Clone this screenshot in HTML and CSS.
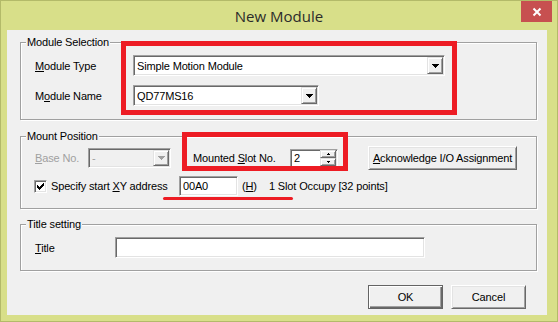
FILE: index.html
```html
<!DOCTYPE html>
<html lang="en">
<head>
    <meta charset="UTF-8">
    <title>New Module</title>
    <link rel="stylesheet" href="styles.css">
</head>
<body>
    <div class="window">
        <div class="titlebar">
            <div class="caption">New Module</div>
            <div class="close">
                <svg width="10" height="10" viewBox="0 0 10 10"><path d="M1.5 1.5L8.5 8.5M8.5 1.5L1.5 8.5" stroke="#fff" stroke-width="2"/></svg>
            </div>
        </div>

        <div class="client">
            <div class="group group-module">
                <div class="group-title">Module Selection</div>
                <div class="row">
                    <span class="lbl lbl-module"><u>M</u>odule Type</span>
                    <div class="field combo combo-type">
                        <span class="field-text">Simple Motion Module</span>
                        <span class="drop"><svg width="7" height="4" viewBox="0 0 7 4"><path d="M0 0h7v1H0zM1 1h5v1H1zM2 2h3v1H2zM3 3h1v1H3z"/></svg></span>
                    </div>
                </div>
                <div class="row row-gap9">
                    <span class="lbl lbl-module">M<u>o</u>dule Name</span>
                    <div class="field combo combo-name">
                        <span class="field-text">QD77MS16</span>
                        <span class="drop"><svg width="7" height="4" viewBox="0 0 7 4"><path d="M0 0h7v1H0zM1 1h5v1H1zM2 2h3v1H2zM3 3h1v1H3z"/></svg></span>
                    </div>
                </div>
            </div>

            <div class="group group-mount">
                <div class="group-title">Mount Position</div>
                <div class="row row-top">
                    <span class="lbl lbl-base disabled"><u>B</u>ase No.</span>
                    <div class="field combo combo-base disabled">
                        <span class="field-text">-</span>
                        <span class="drop"><svg width="7" height="4" viewBox="0 0 7 4"><path fill="#a0a0a0" d="M0 0h7v1H0zM1 1h5v1H1zM2 2h3v1H2zM3 3h1v1H3z"/></svg></span>
                    </div>
                    <span class="lbl lbl-slot">Mounted <u>S</u>lot No.</span>
                    <div class="field spin">
                        <span class="field-text">2</span>
                        <span class="spin-btns">
                            <span class="spin-btn"><svg width="5" height="3" viewBox="0 0 5 3"><path d="M2 0h1v1H2zM1 1h3v1H1z"/></svg></span>
                            <span class="spin-btn"><svg width="5" height="3" viewBox="0 0 5 3"><path d="M1 0h3v1H1zM2 1h1v1H2z"/></svg></span>
                        </span>
                    </div>
                    <button class="btn btn-ack"><u>A</u>cknowledge I/O Assignment</button>
                </div>
                <div class="row row-gap6">
                    <span class="check">
                        <svg width="7" height="7" viewBox="0 0 7 7"><path d="M6 0h1v3H6zM5 1h1v3H5zM4 2h1v3H4zM3 3h1v3H3zM2 4h1v3H2zM1 3h1v3H1zM0 2h1v3H0z"/></svg>
                    </span>
                    <span class="lbl lbl-xy">Specify start <u>X</u>Y address</span>
                    <div class="field edit-xy"><span class="field-text">00A0</span></div>
                    <span class="lbl lbl-hex">(<u>H</u>)</span>
                    <span class="lbl">1 Slot Occupy [32 points]</span>
                </div>
            </div>

            <div class="group group-title-set">
                <div class="group-title">Title setting</div>
                <div class="row">
                    <span class="lbl lbl-title"><u>T</u>itle</span>
                    <div class="field edit-title"></div>
                </div>
            </div>

            <div class="actions">
                <button class="btn btn-default">OK</button>
                <button class="btn">Cancel</button>
            </div>

            <!-- red annotation marks drawn over the dialog -->
            <div class="mark mark-module"></div>
            <div class="mark mark-slot"></div>
            <div class="mark mark-line"></div>
        </div>
    </div>
</body>
</html>
```

FILE: styles.css
```css
* { box-sizing: border-box; }
body { margin: 0; font-family: "Liberation Sans", Arial, sans-serif; font-size: 11px; letter-spacing: -0.15px; color: #000; }
u { text-decoration: underline; text-underline-offset: 1px; }

.window {
    width: 558px; height: 322px;
    background: #d8df89;
    border: 1px solid #b3ba69;
    display: flex; flex-direction: column;
}
.titlebar { height: 29px; display: grid; grid-template-columns: 1fr auto 1fr; align-items: start; }
.caption { grid-column: 2; font-family: "Open Sans", sans-serif; font-size: 15px; letter-spacing: 0; line-height: 30px; color: #2b2b2b; }
.close {
    grid-column: 3; justify-self: end;
    width: 31px; height: 21px; margin-right: 5px;
    background: #c75050;
    display: flex; align-items: center; justify-content: center;
}

.client {
    position: relative; flex: 1;
    margin: 0 10px 6px 6px;
    padding: 12px 10px 0 13px;
    background: #f0f0f0;
}

/* group boxes */
.group {
    position: relative;
    border: 1px solid #a0a0a0;
    box-shadow: inset 1px 1px 0 #fff, 1px 1px 0 #fff;
    padding: 12px 12px 13px 14px;
}
.group-title { position: absolute; top: -7px; left: 5px; padding: 0 1px; background: #f0f0f0; line-height: 13px; }
.group-mount { margin-top: 16px; padding-top: 9px; padding-bottom: 12px; }
.group-title-set { margin-top: 15px; padding-bottom: 12px; }

.row { display: flex; align-items: center; }
.row-gap9 { margin-top: 9px; }
.row-gap6 { margin-top: 6px; }
.row-top { height: 24px; }

.lbl { white-space: nowrap; }
.lbl-module { width: 98px; }
.lbl-base { width: 53px; }
.lbl-slot { width: 97px; margin-left: 22px; }
.lbl-xy { width: 128px; margin-left: 4px; }
.lbl-hex { width: 27px; margin-left: 4px; }
.lbl-title { width: 80px; }
.disabled { color: #a0a0a0; }

/* sunken fields */
.field {
    height: 21px;
    background: #fff;
    border: 1px solid; border-color: #a0a0a0 #fff #fff #a0a0a0;
    box-shadow: inset 1px 1px 0 #696969, inset -1px -1px 0 #e3e3e3;
    display: flex; align-items: center;
    padding: 0 2px 0 3px;
}
.field-text { flex: 1; white-space: nowrap; overflow: hidden; }
.combo { padding-right: 0; }
.combo-type { width: 312px; }
.combo-name { width: 186px; }
.combo-base { width: 83px; height: 20px; }
.combo.disabled { background: #f0f0f0; }
.drop, .spin-btn {
    width: 16px; height: 17px; margin-right: 1px;
    background: #f0f0f0;
    border: 1px solid; border-color: #e3e3e3 #696969 #696969 #e3e3e3;
    box-shadow: inset 1px 1px 0 #fff, inset -1px -1px 0 #a0a0a0;
    display: flex; align-items: center; justify-content: center;
}
.combo-base .drop { height: 16px; }

.spin { width: 48px; height: 19px; padding-right: 0; }
.spin-btns { display: flex; flex-direction: column; }
.spin-btn { height: 8px; width: 16px; }

.edit-xy { width: 59px; height: 20px; }
.edit-title { width: 310px; }

.check {
    width: 13px; height: 13px; margin-left: -1px;
    background: #fff;
    border: 1px solid; border-color: #a0a0a0 #fff #fff #a0a0a0;
    box-shadow: inset 1px 1px 0 #696969, inset -1px -1px 0 #e3e3e3;
    display: flex; align-items: center; justify-content: center;
}

/* push buttons */
.btn {
    height: 24px; padding: 0;
    font: inherit; letter-spacing: inherit; color: #000;
    background: #f0f0f0;
    border: 1px solid; border-color: #fff #696969 #696969 #fff;
    box-shadow: inset 1px 1px 0 #e3e3e3, inset -1px -1px 0 #a0a0a0;
}
.btn-ack { width: 149px; margin-left: 30px; }
.actions { display: flex; justify-content: flex-end; gap: 8px; margin-top: 14px; padding-right: 11px; }
.actions .btn { width: 75px; }
.btn-default {
    border-color: #646464;
    box-shadow: inset 1px 1px 0 #fff, inset -1px -1px 0 #696969, inset -2px -2px 0 #a0a0a0;
}

/* red annotations */
.mark { position: absolute; border: 5px solid #ed1c24; }
.mark-module { left: 114px; top: 11px; width: 336px; height: 74px; }
.mark-slot { left: 175px; top: 102px; width: 166px; height: 39px; }
.mark-line { left: 156px; top: 167px; width: 130px; height: 3px; border: 0; border-radius: 2px; background: #ed1c24; }
```
